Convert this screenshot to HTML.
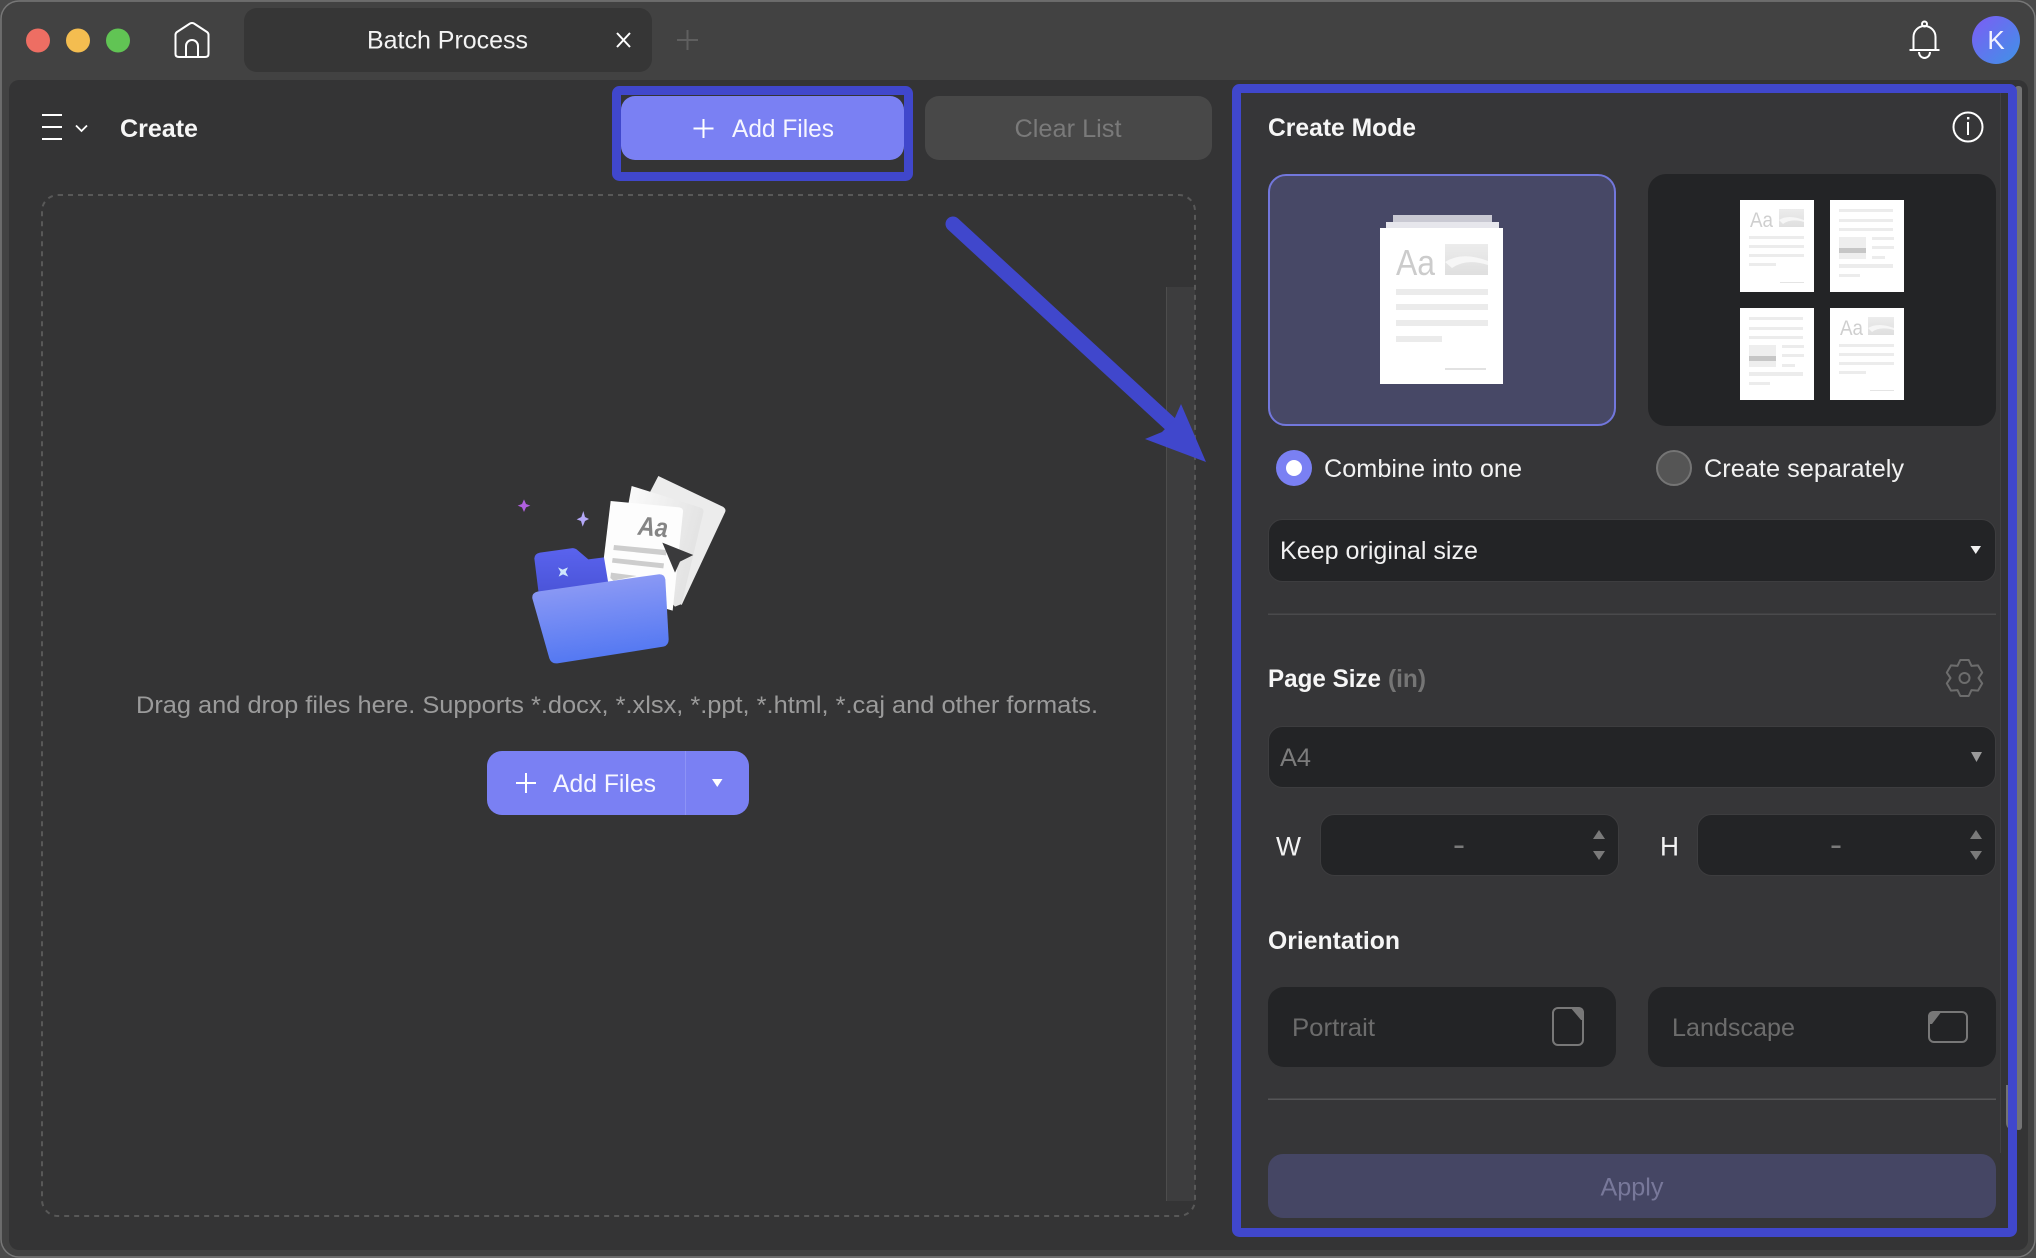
<!DOCTYPE html>
<html lang="en">
<head>
<meta charset="utf-8">
<title>Batch Process</title>
<style>
html,body{margin:0;padding:0;width:2036px;height:1258px;overflow:hidden;background:#4a4a4a}
svg{display:block;position:absolute;left:0;top:0}
text{font-family:"Liberation Sans",sans-serif}
</style>
</head>
<body>
<svg xmlns="http://www.w3.org/2000/svg" width="2036" height="1258" viewBox="0 0 2036 1258">
<defs>
<linearGradient id="av" x1="0" y1="0" x2="1" y2="1"><stop offset="0" stop-color="#7d5cf5"/><stop offset="1" stop-color="#3f93e6"/></linearGradient>
<linearGradient id="ffront" x1="0.3" y1="0" x2="0.5" y2="1"><stop offset="0" stop-color="#929df5"/><stop offset="1" stop-color="#5076f2"/></linearGradient>
<linearGradient id="fback" x1="0" y1="0" x2="0" y2="1"><stop offset="0" stop-color="#5a63ee"/><stop offset="1" stop-color="#4a54d8"/></linearGradient>
<linearGradient id="pap" x1="0" y1="0" x2="1" y2="0.4"><stop offset="0" stop-color="#fdfdfd"/><stop offset="1" stop-color="#e2e2e2"/></linearGradient>
<linearGradient id="thumb" x1="0" y1="0" x2="0" y2="1"><stop offset="0" stop-color="#ececec"/><stop offset="1" stop-color="#dfdfdf"/></linearGradient>
</defs>

<!-- window -->
<rect x="1" y="1" width="2034" height="1256" rx="18" fill="#424242" stroke="#777" stroke-width="1.5"/>
<rect x="9" y="80" width="2019" height="1170" rx="10" fill="#343435"/>
<rect x="1241" y="93" width="759" height="1135" fill="#363638"/>
<rect x="2000" y="93" width="1" height="1060" fill="#414143"/>

<!-- traffic lights -->
<circle cx="38" cy="40.5" r="12" fill="#ee6e63"/>
<circle cx="78" cy="40.5" r="12" fill="#f4bd50"/>
<circle cx="118" cy="40.5" r="12" fill="#61c454"/>

<!-- home -->
<path d="M175.5 35 Q175.500 33 177 32 L190 23.500 Q192 22.500 194 23.500 L207 32 Q208.500 33 208.500 35 V54 Q208.500 57 205 57 H179 Q175.500 57 175.500 54 Z" fill="none" stroke="#fff" stroke-width="2" stroke-linejoin="round"/>
<path d="M186 57 V46 a6 6 0 0 1 12 0 V57" fill="none" stroke="#fff" stroke-width="2"/>

<!-- tab -->
<rect x="244" y="8" width="408" height="64" rx="13" fill="#363636"/>
<text x="367" y="48.500" font-size="25" fill="#f4f4f4" textLength="161" lengthAdjust="spacingAndGlyphs">Batch Process</text>
<path d="M617 33 L630 47 M630 33 L617 47" stroke="#fff" stroke-width="2"/>
<path d="M687.500 30 V50 M677 40 H698" stroke="#5f5f5f" stroke-width="2"/>

<!-- bell -->
<circle cx="1924.500" cy="24" r="2.500" fill="none" stroke="#fff" stroke-width="2"/>
<path d="M1913.500 50 V37 a11 11 0 0 1 22 0 V50 M1909.500 50 H1939.500" fill="none" stroke="#fff" stroke-width="2"/>
<path d="M1919 52 a5.500 6 0 0 0 11 0" fill="none" stroke="#fff" stroke-width="2"/>
<!-- avatar -->
<circle cx="1996" cy="40" r="24" fill="url(#av)"/>
<text x="1996" y="49" font-size="26" fill="#f4f4ff" text-anchor="middle">K</text>

<!-- left header -->
<path d="M42 115 H62 M42 127 H62 M42 139 H62" stroke="#fff" stroke-width="2"/>
<path d="M76 125.500 L81.500 131 L87 125.500" fill="none" stroke="#fff" stroke-width="1.800"/>
<text x="120" y="137" font-size="25" font-weight="700" fill="#f6f6f6" textLength="78" lengthAdjust="spacingAndGlyphs">Create</text>

<!-- top add files + frame -->
<rect x="616.500" y="90.500" width="292" height="86" rx="3" fill="none" stroke="#4047cc" stroke-width="9"/>
<rect x="621" y="96" width="283" height="64" rx="14" fill="#7a80f3"/>
<path d="M703.500 119 V138 M693.500 128.500 H713.500" stroke="#fff" stroke-width="2"/>
<text x="732" y="137" font-size="25" fill="#f6f6ff" textLength="102" lengthAdjust="spacingAndGlyphs">Add Files</text>

<!-- clear list -->
<rect x="925" y="96" width="287" height="64" rx="14" fill="#484848"/>
<text x="1068" y="137" font-size="25" fill="#7a7a7a" text-anchor="middle" textLength="107" lengthAdjust="spacingAndGlyphs">Clear List</text>

<!-- drop zone -->
<rect x="1166" y="287" width="29" height="914" fill="#3d3d3e"/>
<rect x="1166" y="287" width="1" height="914" fill="#4d4d4d"/>
<rect x="42" y="195" width="1153" height="1021" rx="16" fill="none" stroke="#585858" stroke-width="2" stroke-dasharray="5 5"/>

<!-- illustration -->
<g transform="translate(480 450) scale(0.33333)">
<path d="M535 78 L728 170 Q740 176 735 187 L605 465 L420 300 Z" fill="#ececec"/>
<path d="M455 108 L660 172 Q673 176 670 188 L605 462 L585 470 L420 300 Z" fill="url(#pap)"/>
<path d="M392 153 L598 172 Q610 174 609 186 L578 482 L360 420 Z" fill="#fdfdfd"/>
<path d="M402 285 L560 300 L558 316 L400 300 Z M398 324 L552 340 L550 355 L396 338 Z M393 368 L470 378 L400 392 L391 384 Z" fill="#cdcdcd"/>
<text transform="translate(472 254) rotate(5)" font-size="80" font-weight="700" font-style="italic" fill="#858585" textLength="90" lengthAdjust="spacingAndGlyphs">Aa</text>
<path d="M547 278 L640 315 L600 335 L585 368 Z" fill="#3a3a3c"/>
<path d="M163 325 Q164 311 180 308 L272 295 Q284 293 292 300 L325 328 L372 322 L385 400 L176 430 Z" fill="url(#fback)"/>
<path d="M157 445 Q155 430 172 425 L535 373 Q553 371 556 388 L566 568 Q566 586 550 590 L232 640 Q214 642 208 625 Z" fill="url(#ffront)"/>
<path d="M132 148 L138 162 L151 167 L138 172 L132 186 L126 172 L113 167 L126 162 Z" fill="#b060e0"/>
<path d="M310 183 L315 201 L327 207 L315 213 L308 230 L303 213 L290 208 L304 201 Z" fill="#b4a8f8"/>
<path d="M234 352 L248 359 L264 352 L257 366 L265 380 L249 373 L236 380 L242 366 Z" fill="#cfe6fb"/>
</g>

<text x="136" y="713" font-size="24" fill="#9b9b9b" textLength="962" lengthAdjust="spacingAndGlyphs">Drag and drop files here. Supports *.docx, *.xlsx, *.ppt, *.html, *.caj and other formats.</text>

<!-- bottom add files -->
<rect x="487" y="751" width="262" height="64" rx="15" fill="#7a80f3"/>
<rect x="685" y="751" width="1" height="64" fill="#8d93f6"/>
<path d="M526 773 V793 M516 783 H536" stroke="#fff" stroke-width="2"/>
<text x="553" y="792" font-size="25" fill="#f6f6ff" textLength="103" lengthAdjust="spacingAndGlyphs">Add Files</text>
<path d="M712 779 H722.500 L717.250 787 Z" fill="#fff"/>

<!-- arrow -->
<path d="M953 224 L1180 433" stroke="#4047cc" stroke-width="15" stroke-linecap="round"/>
<path d="M1206 462 L1181 404 L1174 420 L1162 432 L1145 439 Z" fill="#4047cc"/>

<!-- right frame -->
<rect x="2015" y="86" width="7" height="1044" rx="3" fill="#737374"/>
<path d="M2006 1085 V1122 Q2006 1130 2014 1130 Q2022 1130 2022 1122 V1085 Z" fill="#737374"/>
<rect x="1236.500" y="88.500" width="776" height="1144" rx="3" fill="none" stroke="#4047cc" stroke-width="9"/>

<!-- create mode -->
<text x="1268" y="136" font-size="25" font-weight="700" fill="#f6f6f6" textLength="148" lengthAdjust="spacingAndGlyphs">Create Mode</text>
<circle cx="1968" cy="127" r="14.500" fill="none" stroke="#fff" stroke-width="2"/>
<rect x="1967" y="117" width="2.400" height="2.400" fill="#fff"/>
<rect x="1967" y="122" width="2" height="13" fill="#fff"/>

<rect x="1269" y="175" width="346" height="250" rx="17" fill="#474866" stroke="#7277dc" stroke-width="2"/>
<rect x="1648" y="174" width="348" height="252" rx="18" fill="#232426"/>

<!-- big doc -->
<rect x="1393" y="215" width="99" height="8" fill="#c9c9d3"/>
<rect x="1386" y="222" width="113" height="7" fill="#e6e6ec"/>
<rect x="1380" y="228" width="123" height="156" fill="#fff"/>
<text x="1396" y="275" font-size="36" fill="#cccccc" textLength="39" lengthAdjust="spacingAndGlyphs">Aa</text>
<rect x="1445" y="244" width="43" height="31" fill="url(#thumb)"/>
<path d="M1445 262 Q1462 251 1488 261 V265 Q1466 258 1452 268 Z" fill="#f6f6f6"/>
<g fill="#ebebeb">
<rect x="1396" y="289" width="92" height="6"/><rect x="1396" y="304" width="92" height="6"/><rect x="1396" y="320" width="92" height="6"/><rect x="1396" y="336" width="46" height="6"/>
</g>
<rect x="1445" y="368" width="41" height="2" fill="#e2e2e2"/>

<!-- small docs -->
<g fill="#fff">
<rect x="1740" y="200" width="74" height="92"/><rect x="1830" y="200" width="74" height="92"/>
<rect x="1740" y="308" width="74" height="92"/><rect x="1830" y="308" width="74" height="92"/>
</g>
<!-- doc A top-left -->
<text x="1750" y="227" font-size="21" fill="#cfcfcf" textLength="23" lengthAdjust="spacingAndGlyphs">Aa</text>
<rect x="1779" y="209" width="25" height="18" fill="url(#thumb)"/>
<path d="M1779 220 Q1788 214 1804 220 V222 Q1791 218 1783 224 Z" fill="#f6f6f6"/>
<g fill="#ececec">
<rect x="1749" y="236" width="55" height="3"/><rect x="1749" y="245" width="55" height="3"/><rect x="1749" y="254" width="55" height="3"/><rect x="1749" y="263" width="27" height="3"/>
</g>
<rect x="1780" y="282" width="24" height="1" fill="#e4e4e4"/>
<!-- doc B top-right -->
<g fill="#ececec">
<rect x="1839" y="209" width="54" height="3"/><rect x="1839" y="219" width="54" height="3"/><rect x="1839" y="228" width="54" height="3"/>
<rect x="1872" y="237" width="22" height="3"/><rect x="1872" y="246" width="22" height="3"/><rect x="1872" y="256" width="13" height="3"/>
<rect x="1839" y="264" width="54" height="4"/><rect x="1839" y="274" width="21" height="3"/>
<rect x="1839" y="237" width="27" height="22" fill="#eeeeee"/>
<rect x="1839" y="248" width="27" height="5" fill="#c6c6c6"/>
</g>
<!-- doc C bottom-left -->
<g fill="#ececec">
<rect x="1749" y="317" width="54" height="3"/><rect x="1749" y="327" width="54" height="3"/><rect x="1749" y="336" width="54" height="3"/>
<rect x="1782" y="345" width="22" height="3"/><rect x="1782" y="354" width="22" height="3"/><rect x="1782" y="364" width="13" height="3"/>
<rect x="1749" y="372" width="54" height="4"/><rect x="1749" y="382" width="21" height="3"/>
<rect x="1749" y="345" width="27" height="22" fill="#eeeeee"/>
<rect x="1749" y="356" width="27" height="5" fill="#c6c6c6"/>
</g>
<!-- doc D bottom-right -->
<text x="1840" y="335" font-size="21" fill="#cfcfcf" textLength="23" lengthAdjust="spacingAndGlyphs">Aa</text>
<rect x="1868" y="317" width="26" height="18" fill="url(#thumb)"/>
<path d="M1868 328 Q1878 322 1894 328 V330 Q1880 326 1872 332 Z" fill="#f6f6f6"/>
<g fill="#ececec">
<rect x="1839" y="344" width="55" height="3"/><rect x="1839" y="353" width="55" height="3"/><rect x="1839" y="362" width="55" height="3"/><rect x="1839" y="371" width="27" height="3"/>
</g>
<rect x="1870" y="390" width="24" height="1" fill="#e4e4e4"/>

<!-- radios -->
<circle cx="1294" cy="468" r="18" fill="#7a80f3"/>
<circle cx="1294" cy="468" r="8" fill="#fff"/>
<text x="1324" y="477" font-size="25" fill="#f2f2f2" textLength="198" lengthAdjust="spacingAndGlyphs">Combine into one</text>
<circle cx="1674" cy="468" r="17" fill="#555" stroke="#757575" stroke-width="2"/>
<text x="1704" y="477" font-size="25" fill="#f2f2f2" textLength="200" lengthAdjust="spacingAndGlyphs">Create separately</text>

<!-- keep original size -->
<rect x="1268.500" y="519.500" width="727" height="62" rx="14" fill="#232426" stroke="#3d3d3f"/>
<text x="1280" y="559" font-size="25" fill="#f2f2f2" textLength="198" lengthAdjust="spacingAndGlyphs">Keep original size</text>
<path d="M1970.500 546 H1981 L1975.750 554 Z" fill="#f0f0f0"/>
<rect x="1268" y="613.500" width="728" height="1.500" fill="#4a4a4c"/>

<!-- page size -->
<text x="1268" y="687" font-size="25" font-weight="700" fill="#f6f6f6" textLength="113" lengthAdjust="spacingAndGlyphs">Page Size</text>
<text x="1388" y="687" font-size="25" font-weight="700" fill="#757575" textLength="38" lengthAdjust="spacingAndGlyphs">(in)</text>
<g transform="translate(1964.500 678)" fill="none" stroke="#6d6d6d" stroke-width="2" stroke-linejoin="round">
<polygon points="-4.200,-18 4.200,-18 7,-12.100 13.500,-12.600 17.700,-5.400 14,0 17.700,5.400 13.500,12.600 7,12.100 4.200,18 -4.200,18 -7,12.100 -13.500,12.600 -17.700,5.400 -14,0 -17.700,-5.400 -13.500,-12.600 -7,-12.100"/>
<circle r="5"/>
</g>

<rect x="1268.500" y="726.500" width="727" height="61" rx="14" fill="#232426" stroke="#3d3d3f"/>
<text x="1280" y="766" font-size="25" fill="#7c7c7c" textLength="31" lengthAdjust="spacingAndGlyphs">A4</text>
<path d="M1971 752 H1982 L1976.500 762 Z" fill="#9a9a9a"/>

<text x="1276" y="855.500" font-size="27" fill="#f2f2f2" textLength="25" lengthAdjust="spacingAndGlyphs">W</text>
<rect x="1320.500" y="814.500" width="298" height="61" rx="14" fill="#232426" stroke="#3d3d3f"/>
<rect x="1454.500" y="845.500" width="9" height="2.500" fill="#7a7a7a"/>
<path d="M1593 839 L1599 830 L1605 839 Z M1593 851 L1599 860 L1605 851 Z" fill="#7a7a7a"/>

<text x="1660" y="855.500" font-size="27" fill="#f2f2f2" textLength="19" lengthAdjust="spacingAndGlyphs">H</text>
<rect x="1697.500" y="814.500" width="298" height="61" rx="14" fill="#232426" stroke="#3d3d3f"/>
<rect x="1831.500" y="845.500" width="9" height="2.500" fill="#7a7a7a"/>
<path d="M1970 839 L1976 830 L1982 839 Z M1970 851 L1976 860 L1982 851 Z" fill="#7a7a7a"/>

<!-- orientation -->
<text x="1268" y="949" font-size="25" font-weight="700" fill="#f6f6f6" textLength="132" lengthAdjust="spacingAndGlyphs">Orientation</text>
<rect x="1268" y="987" width="348" height="80" rx="16" fill="#232426"/>
<rect x="1648" y="987" width="348" height="80" rx="16" fill="#232426"/>
<text x="1292" y="1036" font-size="25" fill="#6c6c6c" textLength="83" lengthAdjust="spacingAndGlyphs">Portrait</text>
<text x="1672" y="1036" font-size="25" fill="#6c6c6c" textLength="123" lengthAdjust="spacingAndGlyphs">Landscape</text>
<rect x="1553" y="1008" width="30" height="37" rx="5" fill="none" stroke="#787878" stroke-width="2"/>
<path d="M1570 1007 H1578 Q1584 1007 1584 1013 V1020 H1581 Z" fill="#787878"/>
<rect x="1929" y="1012" width="38" height="30" rx="5" fill="none" stroke="#787878" stroke-width="2"/>
<path d="M1942 1011 H1934 Q1928 1011 1928 1017 V1024 H1932 Z" fill="#787878"/>
<rect x="1268" y="1098.500" width="728" height="1.500" fill="#555557"/>

<!-- apply -->
<rect x="1268" y="1154" width="728" height="64" rx="15" fill="#454664"/>
<text x="1632" y="1195.500" font-size="25" fill="#78789a" text-anchor="middle" textLength="63" lengthAdjust="spacingAndGlyphs">Apply</text>
</svg>
</body>
</html>
